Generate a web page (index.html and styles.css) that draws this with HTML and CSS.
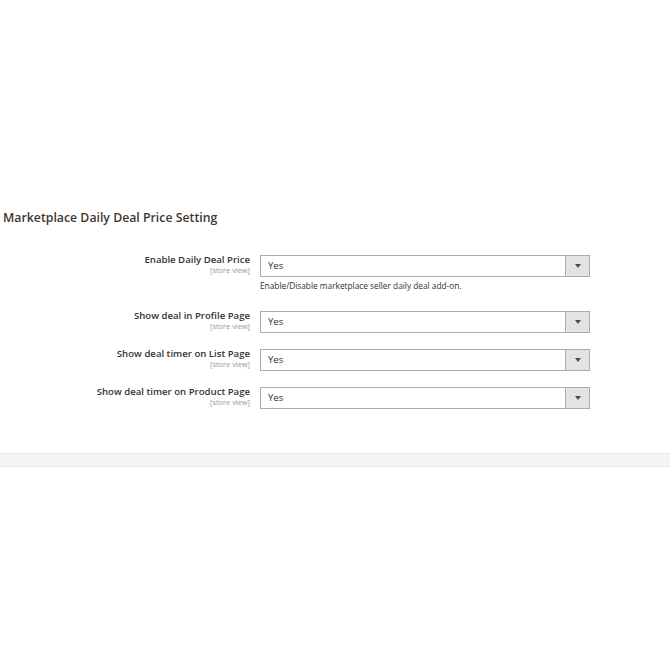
FILE: index.html
```html
<!DOCTYPE html>
<html>
<head>
<meta charset="utf-8">
<link rel="stylesheet" href="styles.css">
</head>
<body>
<div class="page">
  <section class="section">
    <h2 class="title">Marketplace Daily Deal Price Setting</h2>
    <div class="rows">
      <div class="row">
        <div class="label">
          <div class="label-text">Enable Daily Deal Price</div>
          <div class="scope">[store view]</div>
        </div>
        <div class="control">
          <div class="select"><span class="value">Yes</span><span class="arrow"><span class="tri"></span></span></div>
          <div class="note">Enable/Disable marketplace seller daily deal add-on.</div>
        </div>
      </div>
      <div class="row">
        <div class="label">
          <div class="label-text">Show deal in Profile Page</div>
          <div class="scope">[store view]</div>
        </div>
        <div class="control">
          <div class="select"><span class="value">Yes</span><span class="arrow"><span class="tri"></span></span></div>
        </div>
      </div>
      <div class="row">
        <div class="label">
          <div class="label-text">Show deal timer on List Page</div>
          <div class="scope">[store view]</div>
        </div>
        <div class="control">
          <div class="select"><span class="value">Yes</span><span class="arrow"><span class="tri"></span></span></div>
        </div>
      </div>
      <div class="row">
        <div class="label">
          <div class="label-text">Show deal timer on Product Page</div>
          <div class="scope">[store view]</div>
        </div>
        <div class="control">
          <div class="select"><span class="value">Yes</span><span class="arrow"><span class="tri"></span></span></div>
        </div>
      </div>
    </div>
  </section>
  <div class="band"></div>
</div>
</body>
</html>
```

FILE: styles.css
```css
html, body {
  margin: 0;
  padding: 0;
  background: #ffffff;
}
body {
  font-family: "Open Sans", "Liberation Sans", sans-serif;
  color: #303030;
}
.page {
  width: 670px;
  height: 670px;
  padding-top: 210px;
  box-sizing: border-box;
}
.title {
  margin: 0 0 0 3px;
  font-size: 12.3px;
  line-height: 16px;
  font-weight: 600;
  color: #41362f;
}
.rows {
  margin-top: 29px;
  display: flex;
  flex-direction: column;
  gap: 16px;
}
.row {
  display: grid;
  grid-template-columns: 250px 330px;
  column-gap: 10px;
}
.label {
  text-align: right;
  margin-top: -2px;
}
.label-text {
  font-size: 9.6px;
  line-height: 13px;
  font-weight: 600;
  color: #333333;
}
.scope {
  font-size: 7.4px;
  line-height: 9px;
  color: #999999;
}
.select {
  display: flex;
  height: 22px;
  box-sizing: border-box;
  border: 1px solid #adadad;
  background: #ffffff;
}
.value {
  flex: 1;
  font-size: 9.6px;
  line-height: 20px;
  padding-left: 7px;
  color: #303030;
}
.arrow {
  width: 23px;
  border-left: 1px solid #adadad;
  background: #e3e3e3;
  display: flex;
  align-items: center;
  justify-content: center;
}
.tri {
  width: 0;
  height: 0;
  border-left: 3px solid transparent;
  border-right: 3px solid transparent;
  border-top: 4px solid #514943;
}
.note {
  margin-top: 3px;
  padding-bottom: 3px;
  font-size: 8.3px;
  line-height: 12px;
  color: #303030;
}
.band {
  margin-top: 44px;
  height: 14px;
  background: #f5f5f5;
  border-top: 1px solid #ebebeb;
  border-bottom: 1px solid #ebebeb;
  box-sizing: border-box;
}
```
